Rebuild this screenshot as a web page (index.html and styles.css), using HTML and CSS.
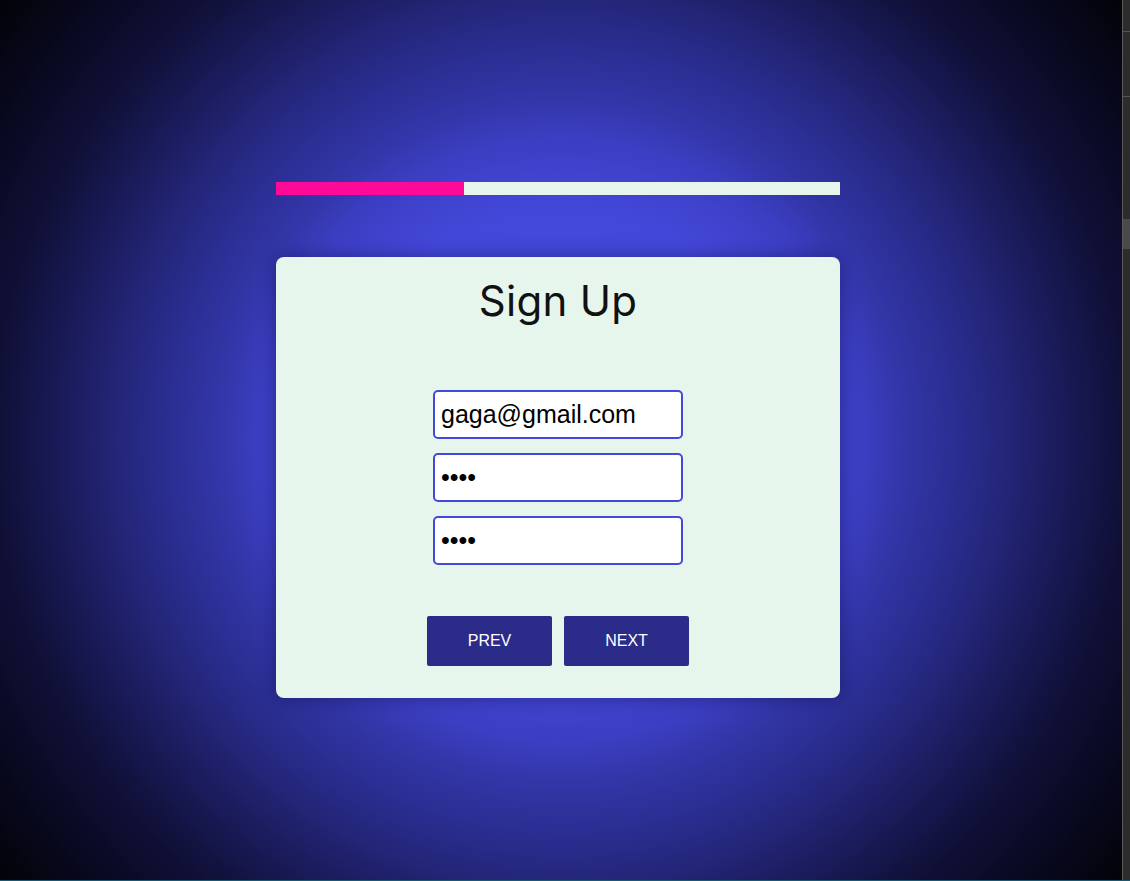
FILE: index.html
```html
<!DOCTYPE html>
<html lang="en">
<head>
<meta charset="utf-8">
<title>Sign Up</title>
<link rel="stylesheet" href="styles.css">
</head>
<body>
<div class="screen">
  <main class="stage">
    <div class="wizard">
      <div class="progress"><div class="progress-fill" style="width: 33.333%"></div></div>
      <section class="card">
        <h1 class="title">Sign Up</h1>
        <form class="fields">
          <input class="field" type="email" value="gaga@gmail.com">
          <input class="field" type="password" value="1234">
          <input class="field" type="password" value="1234">
        </form>
        <div class="actions">
          <button class="btn" type="button">PREV</button>
          <button class="btn" type="button">NEXT</button>
        </div>
      </section>
    </div>
  </main>
  <aside class="side-rail"><div class="rail-box"></div><div class="rail-thumb"></div></aside>
</div>
<div class="bottom-strip"></div>
</body>
</html>
```
FILE: styles.css
```css
* { box-sizing: border-box; }
html, body { margin: 0; padding: 0; }
body {
  width: 1130px;
  height: 881px;
  overflow: hidden;
  font-family: "Liberation Sans", Arial, sans-serif;
  background: #05050f;
}
.screen {
  display: flex;
  height: 880px;
}
.stage {
  flex: 1;
  display: flex;
  justify-content: center;
  padding: 182px 6px 0 0;
  background: radial-gradient(circle farthest-corner at 50% 50%,
    #4549de 0%, #4448da 32%, #3c3fc3 42%, #3236a8 48%, #2b2e92 55%, #24267a 62%, #1a1b5a 70%, #101038 79%, #08081e 90%, #030309 100%);
}
.wizard {
  width: 564px;
  display: flex;
  flex-direction: column;
}
.progress {
  height: 13px;
  background: #e6f6ec;
}
.progress-fill {
  height: 100%;
  background: #ff0a98;
}
.card {
  margin-top: 62px;
  height: 441px;
  background: #e6f6ec;
  border-radius: 8px;
  box-shadow: 0 0 18px rgba(10, 10, 60, 0.45);
  display: flex;
  flex-direction: column;
  align-items: center;
  padding: 19px 0 32px;
}
.title {
  margin: 0;
  font-family: "Inter", "Noto Sans", sans-serif;
  font-weight: 400;
  font-size: 42px;
  line-height: 50px;
  letter-spacing: 0.3px;
  color: #111111;
}
.fields {
  margin-top: 64px;
  display: flex;
  flex-direction: column;
  gap: 14px;
}
.field {
  width: 250px;
  height: 49px;
  border: 2px solid #4549d9;
  border-radius: 5px;
  background: #ffffff;
  padding: 0 6px;
  font-family: "Liberation Sans", Arial, sans-serif;
  font-size: 25px;
  color: #000;
  outline: none;
}
.actions {
  margin-top: auto;
  display: flex;
  gap: 12px;
}
.btn {
  width: 125px;
  height: 50px;
  border: none;
  border-radius: 2px;
  background: #2b2b8a;
  color: #ffffff;
  font-family: "Liberation Sans", Arial, sans-serif;
  font-size: 16px;
  padding: 0;
}
.side-rail {
  width: 8px;
  background: #2c2c2c;
  border-left: 1px solid #5a5a5a;
}
.rail-box {
  margin-top: 31px;
  height: 66px;
  border-top: 1px solid #555;
  border-bottom: 1px solid #555;
}
.rail-thumb {
  margin-top: 122px;
  height: 30px;
  background: #4a4a4a;
}
.bottom-strip {
  height: 1px;
  background: #1a5870;
}
```
